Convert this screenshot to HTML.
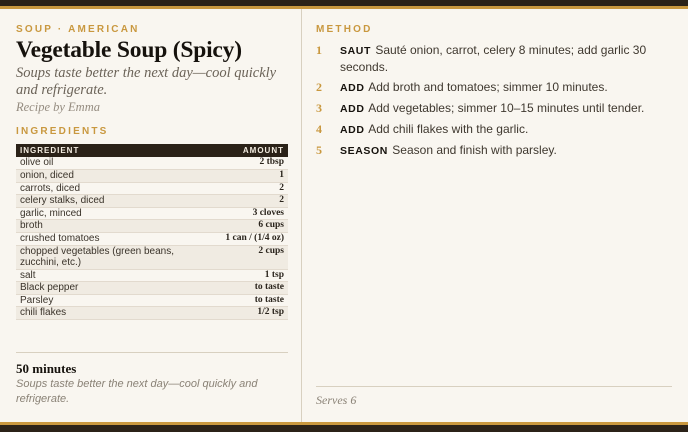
<!DOCTYPE html>
<html><head><meta charset="utf-8"><style>
*{margin:0;padding:0;box-sizing:border-box}
body{width:688px;height:432px;background:#f9f6f0;position:relative;overflow:hidden;font-family:"Liberation Sans",sans-serif;color:#2a241c}
.topd{position:absolute;left:0;top:0;width:688px;height:6px;background:#2b2218}
.topg{position:absolute;left:0;top:6px;width:688px;height:3px;background:#c9983f}
.botg{position:absolute;left:0;top:422px;width:688px;height:3px;background:#c9983f}
.botd{position:absolute;left:0;top:425px;width:688px;height:7px;background:#2b2218}
.vdiv{position:absolute;left:301px;top:9px;width:1px;height:413px;background:#d8d0c0}
.kick{position:absolute;font-size:10px;font-weight:bold;letter-spacing:2.2px;color:#c9983f}
h1{position:absolute;left:16px;top:37px;font-family:"Liberation Serif",serif;font-size:23.5px;font-weight:bold;color:#16120d;letter-spacing:-0.2px}
.sub{position:absolute;left:16px;top:65px;width:280px;font-family:"Liberation Serif",serif;font-style:italic;font-size:14.5px;line-height:17px;color:#6b6358}
.by{position:absolute;left:16px;top:100px;font-family:"Liberation Serif",serif;font-style:italic;font-size:12.5px;color:#958c80}
table{position:absolute;left:16px;top:144px;width:272px;border-collapse:collapse;font-size:10px}
th{background:#2b2218;color:#f3ece0;font-size:8px;letter-spacing:1px;height:13px;padding:0 4px;text-align:left}
th.r{text-align:right}
td{height:12.6px;padding:0 4px;border-bottom:1px solid #e2dace;color:#3a332a;line-height:11px;vertical-align:top}
td.a{text-align:right;font-family:"Liberation Serif",serif;font-weight:bold;color:#2a241c;font-size:9.5px}
tr.s td{background:#f0ebe2}
.hl{position:absolute;height:1px;background:#d8d0c0}
.time{position:absolute;left:16px;top:361px;font-family:"Liberation Serif",serif;font-weight:bold;font-size:13px;color:#16120d}
.note{position:absolute;left:16px;top:377px;width:260px;font-style:italic;font-size:11px;line-height:15px;color:#8a8276}
.serves{position:absolute;left:316px;top:393px;font-family:"Liberation Serif",serif;font-style:italic;font-size:12px;color:#8a8276}
.step{position:absolute;left:316px;width:360px;font-size:12px;line-height:15.5px;color:#3f382f}
.step .n{position:absolute;left:0;top:0;font-family:"Liberation Serif",serif;font-weight:bold;color:#c9983f;font-size:12px}
.step .t{margin-left:24px;display:block}
.step b{color:#16120d;font-size:10.5px;letter-spacing:0.6px;margin-right:1px}
</style></head><body>
<div class="topd"></div><div class="topg"></div>
<div class="vdiv"></div>
<div class="kick" style="left:16px;top:24px">SOUP · AMERICAN</div>
<h1>Vegetable Soup (Spicy)</h1>
<div class="sub">Soups taste better the next day—cool quickly and refrigerate.</div>
<div class="by">Recipe by Emma</div>
<div class="kick" style="left:16px;top:126px">INGREDIENTS</div>
<table>
<tr><th>INGREDIENT</th><th class="r">AMOUNT</th></tr>
<tr><td>olive oil</td><td class="a">2 tbsp</td></tr>
<tr class="s"><td>onion, diced</td><td class="a">1</td></tr>
<tr><td>carrots, diced</td><td class="a">2</td></tr>
<tr class="s"><td>celery stalks, diced</td><td class="a">2</td></tr>
<tr><td>garlic, minced</td><td class="a">3 cloves</td></tr>
<tr class="s"><td>broth</td><td class="a">6 cups</td></tr>
<tr><td>crushed tomatoes</td><td class="a">1 can / (1/4 oz)</td></tr>
<tr class="s"><td style="height:24px">chopped vegetables (green beans,<br>zucchini, etc.)</td><td class="a">2 cups</td></tr>
<tr><td>salt</td><td class="a">1 tsp</td></tr>
<tr class="s"><td>Black pepper</td><td class="a">to taste</td></tr>
<tr><td>Parsley</td><td class="a">to taste</td></tr>
<tr class="s"><td>chili flakes</td><td class="a">1/2 tsp</td></tr>
</table>
<div class="hl" style="left:16px;top:352px;width:272px"></div>
<div class="time">50 minutes</div>
<div class="note">Soups taste better the next day—cool quickly and refrigerate.</div>
<div class="kick" style="left:316px;top:24px">METHOD</div>
<div class="step" style="top:43px"><span class="n">1</span><span class="t"><b>SAUT</b> Sauté onion, carrot, celery 8 minutes; add garlic 30 seconds.</span></div>
<div class="step" style="top:80px"><span class="n">2</span><span class="t"><b>ADD</b> Add broth and tomatoes; simmer 10 minutes.</span></div>
<div class="step" style="top:101px"><span class="n">3</span><span class="t"><b>ADD</b> Add vegetables; simmer 10–15 minutes until tender.</span></div>
<div class="step" style="top:122px"><span class="n">4</span><span class="t"><b>ADD</b> Add chili flakes with the garlic.</span></div>
<div class="step" style="top:143px"><span class="n">5</span><span class="t"><b>SEASON</b> Season and finish with parsley.</span></div>
<div class="hl" style="left:316px;top:386px;width:356px"></div>
<div class="serves">Serves 6</div>
<div class="botg"></div><div class="botd"></div>
</body></html>
